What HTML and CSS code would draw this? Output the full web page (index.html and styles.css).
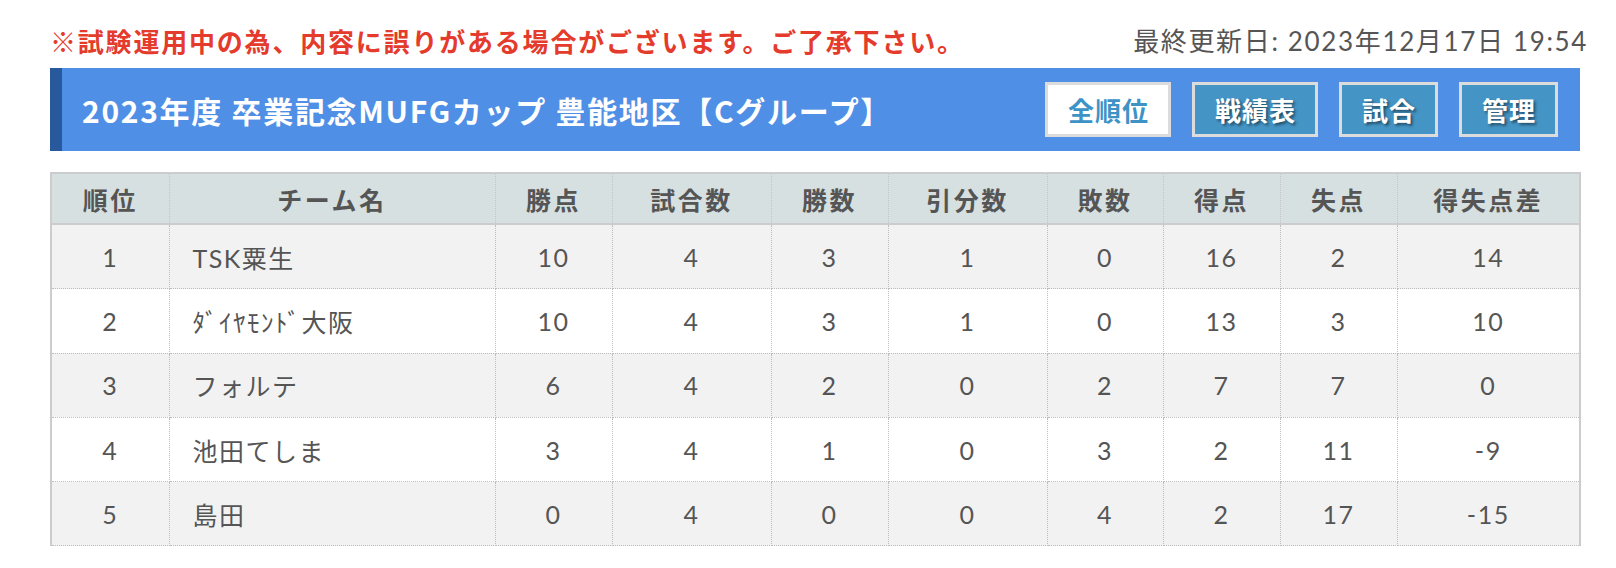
FILE: index.html
```html
<!DOCTYPE html>
<html lang="ja">
<head>
<meta charset="utf-8">
<title>順位表</title>
<link rel="stylesheet" href="styles.css">
</head>
<body>
<div class="page">
  <div class="notice-row">
    <p class="notice">※試験運用中の為、内容に誤りがある場合がございます。ご了承下さい。</p>
    <p class="updated">最終更新日: 2023年12月17日 19:54</p>
  </div>
  <div class="title-bar">
    <h1 class="title">2023年度 卒業記念MUFGカップ 豊能地区【Cグループ】</h1>
    <nav class="tabs">
      <a class="tab tab-active">全順位</a>
      <a class="tab">戦績表</a>
      <a class="tab">試合</a>
      <a class="tab">管理</a>
    </nav>
  </div>
  <table class="standings">
    <colgroup>
      <col class="c-rank"><col class="c-team"><col class="c-2"><col class="c-3"><col class="c-2"><col class="c-3"><col class="c-2b"><col class="c-2"><col class="c-2"><col class="c-4">
    </colgroup>
    <thead>
      <tr>
        <th>順位</th><th>チーム名</th><th>勝点</th><th>試合数</th><th>勝数</th><th>引分数</th><th>敗数</th><th>得点</th><th>失点</th><th>得失点差</th>
      </tr>
    </thead>
    <tbody>
      <tr><td>1</td><td class="team">TSK粟生</td><td>10</td><td>4</td><td>3</td><td>1</td><td>0</td><td>16</td><td>2</td><td>14</td></tr>
      <tr><td>2</td><td class="team">ﾀﾞｲﾔﾓﾝﾄﾞ大阪</td><td>10</td><td>4</td><td>3</td><td>1</td><td>0</td><td>13</td><td>3</td><td>10</td></tr>
      <tr><td>3</td><td class="team">フォルテ</td><td>6</td><td>4</td><td>2</td><td>0</td><td>2</td><td>7</td><td>7</td><td>0</td></tr>
      <tr><td>4</td><td class="team">池田てしま</td><td>3</td><td>4</td><td>1</td><td>0</td><td>3</td><td>2</td><td>11</td><td>-9</td></tr>
      <tr><td>5</td><td class="team">島田</td><td>0</td><td>4</td><td>0</td><td>0</td><td>4</td><td>2</td><td>17</td><td>-15</td></tr>
    </tbody>
  </table>
</div>
</body>
</html>
```

FILE: styles.css
```css
html, body {
  margin: 0;
  padding: 0;
  background: #ffffff;
}

.page {
  width: 1530px;
  margin-left: 50px;
  font-family: "Lato", "Noto Sans CJK JP", sans-serif;
  color: #555555;
}

.notice-row {
  display: flex;
  justify-content: space-between;
  align-items: center;
  padding-top: 24px;
  margin-right: -8px;
  margin-bottom: 10px;
  height: 34px;
}

.notice {
  margin: 0;
  font-family: "Noto Sans CJK JP", sans-serif;
  font-weight: 700;
  font-size: 26px;
  line-height: 34px;
  letter-spacing: 1.8px;
  color: #e43b2c;
}

.updated {
  margin: 0;
  font-size: 26px;
  line-height: 34px;
  letter-spacing: 1.65px;
  color: #555555;
}

.title-bar {
  display: flex;
  align-items: center;
  height: 83px;
  box-sizing: border-box;
  background: #508fe6;
  border-left: 12px solid #28599c;
  padding-left: 20px;
  padding-right: 22px;
  margin-bottom: 21px;
}

.title {
  margin: 0;
  font-family: "Noto Sans CJK JP", sans-serif;
  font-weight: 700;
  font-size: 30px;
  line-height: 40px;
  letter-spacing: 1.7px;
  color: #ffffff;
}

.tabs {
  margin-left: auto;
  display: flex;
  gap: 21px;
}

.tab {
  display: flex;
  align-items: center;
  justify-content: center;
  height: 55px;
  box-sizing: border-box;
  padding: 0 19px 0 20px;
  border: 3px solid #dcdcdc;
  background: #4495c6;
  font-family: "Noto Sans CJK JP", sans-serif;
  font-weight: 700;
  font-size: 26px;
  letter-spacing: 1px;
  color: #ffffff;
  text-shadow: 2px 2px 3px rgba(0, 0, 0, 0.5);
  cursor: pointer;
}

.tab-active {
  background: #ffffff;
  color: #3d93c6;
  text-shadow: none;
}

.standings {
  width: 1530px;
  border-collapse: collapse;
  table-layout: fixed;
  border-top: 2px solid #cccccc;
  border-left: 2px solid #cccccc;
  border-right: 2px solid #cccccc;
  font-size: 25px;
  letter-spacing: 1.5px;
}

.c-rank { width: 118px; }
.c-team { width: 326px; }
.c-2 { width: 117px; }
.c-2b { width: 116px; }
.c-3 { width: 159px; }
.c-4 { width: 183px; }

.standings th {
  height: 49px;
  padding: 0;
  background: #d6e0e1;
  font-family: "Noto Sans CJK JP", sans-serif;
  font-weight: 700;
  letter-spacing: 2.5px;
  color: #555555;
  text-align: center;
  border-left: 1px dotted #c4c4c4;
  border-right: 1px dotted #c4c4c4;
  border-bottom: 2px solid #cccccc;
}

.standings td {
  height: 63.3px;
  padding: 0;
  text-align: center;
  color: #555555;
  border: 1px dotted #bdbdbd;
}

.standings tbody tr:nth-child(odd) td {
  background: #f2f2f2;
}

.standings tbody tr:nth-child(even) td {
  background: #ffffff;
}

.standings td.team {
  text-align: left;
  padding-left: 23px;
}
```
